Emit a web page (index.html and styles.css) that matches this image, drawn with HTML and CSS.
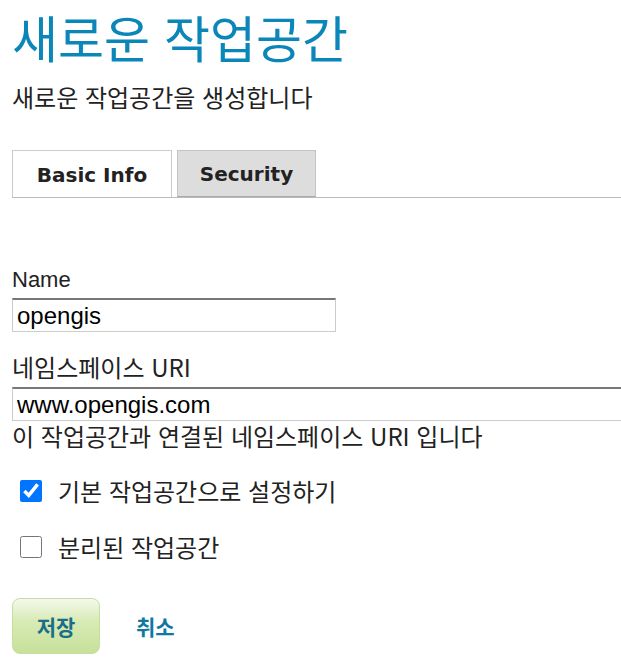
FILE: index.html
```html
<!DOCTYPE html>
<html lang="ko">
<head>
<meta charset="utf-8">
<title>새로운 작업공간</title>
<link rel="stylesheet" href="styles.css">
</head>
<body>
<div class="page">
  <h1 class="title">새로운 작업공간</h1>
  <p class="subtitle">새로운 작업공간을 생성합니다</p>

  <div class="tabs">
    <div class="tab tab-active">Basic Info</div>
    <div class="tab tab-inactive">Security</div>
  </div>

  <form class="form">
    <div class="field">
      <label class="field-label label-latin" for="name">Name</label>
      <input id="name" class="text-input input-name" type="text" value="opengis">
    </div>
    <div class="field field-uri">
      <label class="field-label" for="uri">네임스페이스 URI</label>
      <input id="uri" class="text-input input-uri" type="text" value="www.opengis.com">
      <div class="help">이 작업공간과 연결된 네임스페이스 URI 입니다</div>
    </div>

    <div class="check-row check-first">
      <input id="def" class="check" type="checkbox" checked>
      <label for="def" class="check-label">기본 작업공간으로 설정하기</label>
    </div>
    <div class="check-row check-second">
      <input id="iso" class="check" type="checkbox">
      <label for="iso" class="check-label">분리된 작업공간</label>
    </div>

    <div class="actions">
      <button type="button" class="btn-save">저장</button>
      <a class="link-cancel" href="#">취소</a>
    </div>
  </form>
</div>
</body>
</html>
```

FILE: styles.css
```css
html, body {
  margin: 0;
  padding: 0;
  background: #ffffff;
}

body {
  font-family: "Noto Sans CJK KR", "Liberation Sans", sans-serif;
  color: #222222;
  overflow: hidden;
}

.page {
  padding: 0 0 0 12px;
  overflow: hidden;
}

.title {
  margin: 0;
  font-size: 50px;
  font-weight: 400;
  line-height: normal;
  color: #0a86b8;
}

.subtitle {
  margin: 9px 0 0 0;
  font-size: 24px;
  line-height: 32px;
  color: #222222;
}

.tabs {
  display: flex;
  gap: 5px;
  margin-top: 37px;
  border-bottom: 1px solid #bbbbbb;
  height: 47px;
}

.tab {
  box-sizing: border-box;
  height: 47px;
  display: flex;
  align-items: center;
  justify-content: center;
  font-family: "DejaVu Sans", sans-serif;
  font-weight: 700;
  font-size: 20px;
  color: #222222;
  border: 1px solid #cccccc;
  border-bottom: none;
  padding-top: 1px;
}

.tab-active {
  width: 160px;
  background: #ffffff;
}

.tab-inactive {
  width: 139px;
  background: #dddddd;
  border-color: #c4c4c4;
  border-bottom: 1px solid #aaaaaa;
}

.form {
  margin-top: 66px;
}

.field {
  display: flex;
  flex-direction: column;
  align-items: flex-start;
}

.field-uri {
  margin-top: 19px;
}

.field-label {
  font-size: 24px;
  line-height: 31px;
  color: #222222;
}

.label-latin {
  font-family: "Liberation Sans", sans-serif;
  font-size: 22px;
}

.text-input {
  box-sizing: border-box;
  height: 34px;
  margin: 3px 0 0 0;
  padding: 0 0 0 4px;
  font-family: "Liberation Sans", sans-serif;
  font-size: 24px;
  color: #000000;
  border: 1px solid #cccccc;
  border-top: 2px solid #777777;
  border-radius: 0;
  background: #ffffff;
  outline: none;
}

.input-name {
  width: 324px;
}

.input-uri {
  width: 640px;
  margin-top: 5px;
}

.help {
  font-size: 24px;
  line-height: 30px;
  color: #222222;
}

.check-row {
  display: flex;
  align-items: center;
  gap: 16px;
  padding-left: 8px;
  height: 34px;
}

.check-first {
  margin-top: 23px;
}

.check-second {
  margin-top: 22px;
}

.check {
  width: 22px;
  height: 22px;
  margin: 0;
  accent-color: #0075ff;
}

.check-label {
  font-size: 24px;
  line-height: 32px;
  color: #222222;
}

.actions {
  display: flex;
  align-items: center;
  gap: 36px;
  margin-top: 34px;
}

.btn-save {
  box-sizing: border-box;
  width: 88px;
  height: 56px;
  border: 1px solid #c6df9f;
  border-radius: 8px;
  background: linear-gradient(to bottom, #f4f9ec 0%, #d8ebb6 40%, #c6e19a 100%);
  font-family: "Noto Sans CJK KR", sans-serif;
  font-weight: 700;
  font-size: 21px;
  color: #1b6e87;
  padding: 0;
}

.link-cancel {
  font-weight: 700;
  font-size: 21px;
  color: #0f78a2;
  text-decoration: none;
}
```
